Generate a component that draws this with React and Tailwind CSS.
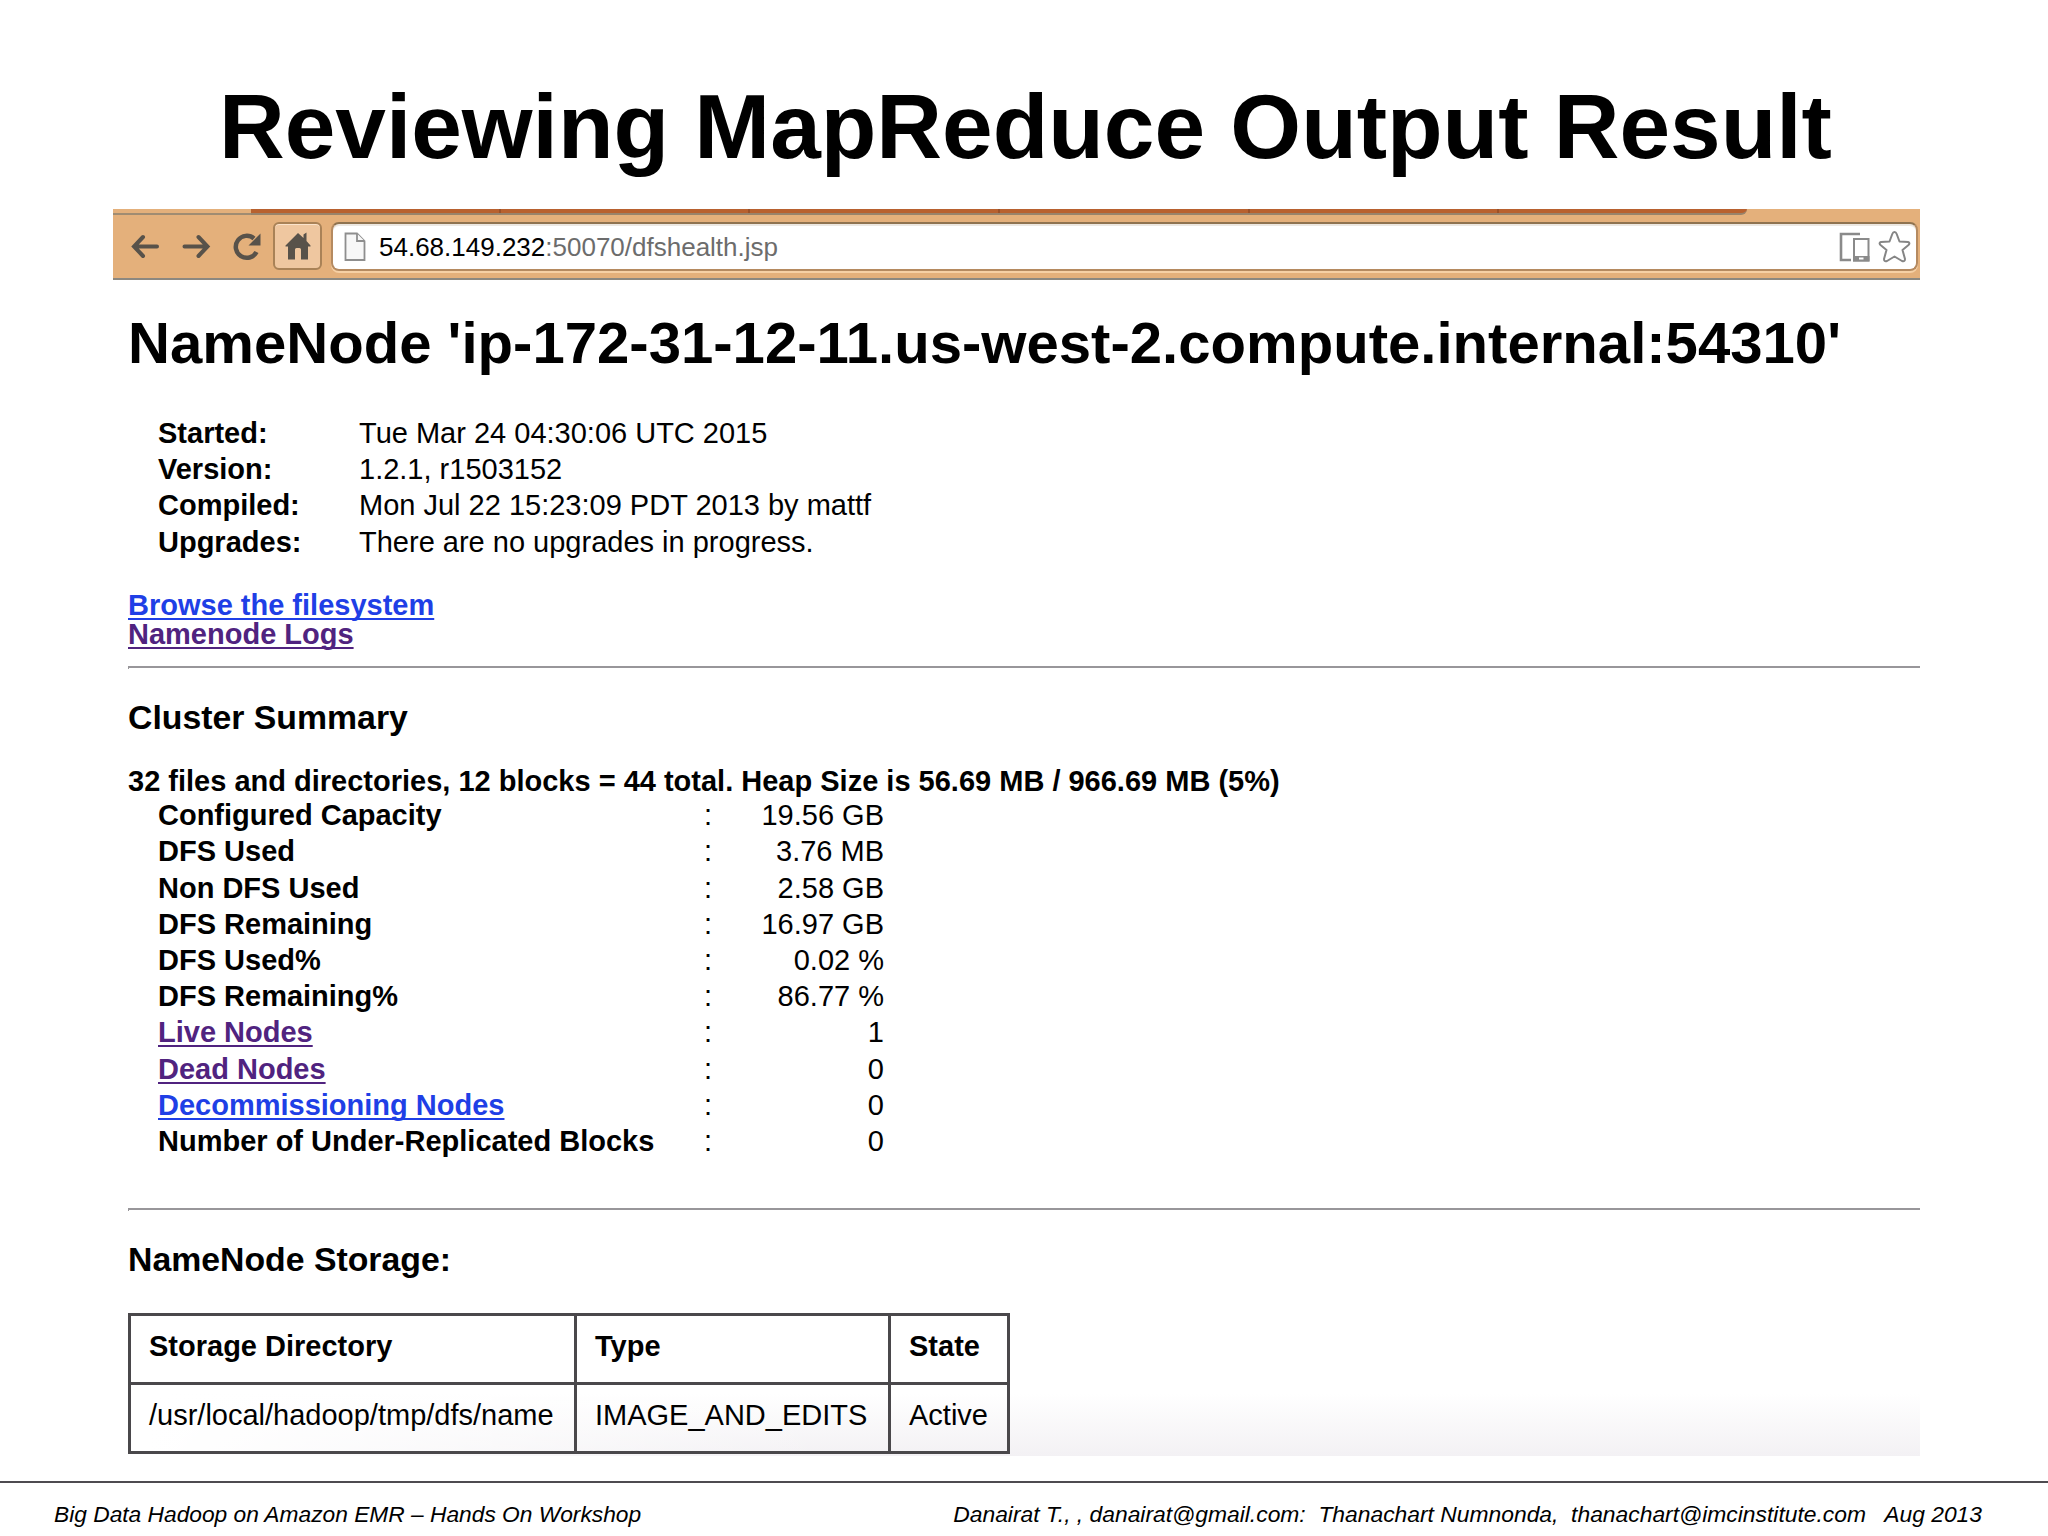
const info = [
  ["Started:", "Tue Mar 24 04:30:06 UTC 2015"],
  ["Version:", "1.2.1, r1503152"],
  ["Compiled:", "Mon Jul 22 15:23:09 PDT 2013 by mattf"],
  ["Upgrades:", "There are no upgrades in progress."],
];

const summary = [
  { label: "Configured Capacity", value: "19.56 GB" },
  { label: "DFS Used", value: "3.76 MB" },
  { label: "Non DFS Used", value: "2.58 GB" },
  { label: "DFS Remaining", value: "16.97 GB" },
  { label: "DFS Used%", value: "0.02 %" },
  { label: "DFS Remaining%", value: "86.77 %" },
  { label: "Live Nodes", value: "1", link: "visited" },
  { label: "Dead Nodes", value: "0", link: "visited" },
  { label: "Decommissioning Nodes", value: "0", link: "new" },
  { label: "Number of Under-Replicated Blocks", value: "0" },
];

const linkStyles = {
  new: "text-[#1f3fe6] underline decoration-2 underline-offset-[3px] [text-decoration-skip-ink:none]",
  visited: "text-[#50237f] underline decoration-2 underline-offset-[3px] [text-decoration-skip-ink:none]",
};

function Link({ kind, children }) {
  return <a className={linkStyles[kind]}>{children}</a>;
}

function Rule() {
  return <hr className="h-[3px] border-0 border-t-2 border-l border-[#98969a]" />;
}

function BrowserBar() {
  return (
    <div className="flex h-[71px] flex-col border-b-2 border-[#8c8880] bg-[#e4b07b]">
      <div className="flex h-[6px] shrink-0">
        <div className="w-[138px] border-b-2 border-[#a08c72] bg-[#e4b07b]" />
        <div className="flex w-[1496px] justify-evenly rounded-br-md border-b-2 border-[#98836b] bg-[#b8612f]">
          <span className="w-[2px] bg-[#9b5128]" />
          <span className="w-[2px] bg-[#9b5128]" />
          <span className="w-[2px] bg-[#9b5128]" />
          <span className="w-[2px] bg-[#9b5128]" />
          <span className="w-[2px] bg-[#9b5128]" />
        </div>
      </div>
      <div className="flex items-start pt-[7px]">
        <svg className="mt-[9px] ml-[17px] h-8 w-[30px]" viewBox="0 0 30 32" fill="none" stroke="#58524a" strokeWidth="4" strokeLinecap="round">
          <path d="M27 15.500H4.500M13 6L4 15.500L13 25" />
        </svg>
        <svg className="mt-[9px] ml-[21px] h-8 w-[30px]" viewBox="0 0 30 32" fill="none" stroke="#58524a" strokeWidth="4" strokeLinecap="round">
          <path d="M3.500 15.500H26M17.500 6L26.500 15.500L17.500 25" />
        </svg>
        <svg className="mt-[9px] ml-[21px] h-8 w-[30px]" viewBox="0 0 30 32" fill="none">
          <path d="M24.500 21A11 11 0 1 1 22 7.500" stroke="#58524a" strokeWidth="4.500" />
          <path d="M28.500 2.500V14.500H16.500Z" fill="#58524a" />
        </svg>
        <div className="ml-[11px] flex h-[48px] w-[49px] items-center justify-center rounded-md border-2 border-[#a98257] bg-[#efc7a0] shadow-[inset_0_1px_0_#fbe3cb]">
          <svg className="h-[30px] w-[28px]" viewBox="0 0 28 30" fill="#58524a">
            <path d="M14 2L19.500 7V3.500L22.500 1.500V10L26.500 14.500V15.500H24V28.500H17V18.500Q17 17 15.500 17H12.500Q11 17 11 18.500V28.500H4V15.500H1.500V14.500Z" />
          </svg>
        </div>
        <div className="ml-[9px] flex h-[49px] w-[1587px] items-center rounded-lg border-2 border-[#b58a60] border-t-[#8f7350] bg-white shadow-[inset_0_2px_0_#ece7e1,0_2px_0_#f6d0a5]">
          <svg className="ml-[11px] h-[30px] w-[22px]" viewBox="0 0 22 30" fill="#f7f7f7" stroke="#8e8e8e" strokeWidth="1.800">
            <path d="M1.500 1.500H13L20.500 9V28H1.500Z" />
            <path d="M13 1.500V9H20.500" />
          </svg>
          <span className="mt-[2px] ml-[13px] text-[26px] whitespace-pre text-[#6c6c6c]">
            <span className="text-black">54.68.149.232</span>:50070/dfshealth.jsp
          </span>
          <svg className="ml-auto h-[32px] w-[31px]" viewBox="0 0 31 32" fill="none" stroke="#8a8a8a" strokeWidth="2">
            <path d="M21 3H2V29H12" strokeWidth="2.600" />
            <path d="M15 8H29.500V29.500H15Z" />
            <path d="M15 26H29.500V29.500H15Z" fill="#8a8a8a" />
            <path d="M20 27.500H24.500" stroke="white" />
          </svg>
          <svg className="mr-[5px] ml-[8px] h-[34px] w-[33px]" viewBox="0 0 33 34" fill="none" stroke="#858585" strokeWidth="2" strokeLinejoin="round">
            <path d="M16.500 2Q18 2 18.700 4L21.500 11.500L30 12Q32.500 13 30.500 15L24.500 20L27 29Q27 32 24 31L16.500 26.500L9 31Q6 32 6 29L8.500 20L2.500 15Q.500 13 3 12L11.500 11.500L14.300 4Q15 2 16.500 2Z" />
          </svg>
        </div>
      </div>
    </div>
  );
}

function StorageTable() {
  return (
    <table className="mt-[34px] w-[881px] table-fixed border-collapse border-[3px] border-[#4a484b] text-left">
      <colgroup>
        <col className="w-[446px]" />
        <col className="w-[314px]" />
        <col className="w-[119px]" />
      </colgroup>
      <tbody>
        <tr className="h-[69px]">
          <th className="border-[3px] border-[#4a484b] pb-[6px] pl-[18px]">Storage Directory</th>
          <th className="border-[3px] border-[#4a484b] pb-[6px] pl-[18px]">Type</th>
          <th className="border-[3px] border-[#4a484b] pb-[6px] pl-[18px]">State</th>
        </tr>
        <tr className="h-[69px]">
          <td className="border-[3px] border-[#4a484b] pb-[6px] pl-[18px]">/usr/local/hadoop/tmp/dfs/name</td>
          <td className="border-[3px] border-[#4a484b] pb-[6px] pl-[18px]">IMAGE_AND_EDITS</td>
          <td className="border-[3px] border-[#4a484b] pb-[6px] pl-[18px]">Active</td>
        </tr>
      </tbody>
    </table>
  );
}

export default function App() {
  return (
    <div className="flex h-[1536px] w-[2048px] flex-col overflow-hidden bg-white font-['Liberation_Sans',Arial,sans-serif] text-black">
      <header className="h-[209px] shrink-0 pt-[77px] pl-[219px]">
        <h1 className="text-[91px] leading-[100px] font-bold whitespace-nowrap">Reviewing MapReduce Output Result</h1>
      </header>

      <main className="ml-[113px] h-[1247px] w-[1807px] shrink-0 bg-[linear-gradient(to_right,white_2%,transparent_40%),linear-gradient(to_bottom,white_95%,#f3f1f4)]">
        <BrowserBar />
        <div className="pl-[15px] text-[29px] leading-[36.2px] whitespace-nowrap">
          <h2 className="pt-[33px] text-[58.1px] leading-[60px] font-bold">
            NameNode 'ip-172-31-12-11.us-west-2.compute.internal:54310'
          </h2>

          <div className="mt-[42px] grid grid-cols-[201px_1fr] pl-[30px]">
            {info.map(([label, value]) => (
              <div key={label} className="contents">
                <b>{label}</b>
                <span>{value}</span>
              </div>
            ))}
          </div>

          <div className="mt-[31px] mb-[17px] flex flex-col items-start leading-[29px] font-bold">
            <Link kind="new">Browse the filesystem</Link>
            <Link kind="visited">Namenode Logs</Link>
          </div>
          <Rule />

          <h3 className="mt-[28px] text-[33.8px] leading-[40px] font-bold">Cluster Summary</h3>
          <p className="mt-[29px] leading-[30px] font-bold">
            32 files and directories, 12 blocks = 44 total. Heap Size is 56.69 MB / 966.69 MB (5%)
          </p>
          <div className="mt-[1.4px] mb-[48.6px] pl-[30px]">
            {summary.map(({ label, value, link }) => (
              <div key={label} className="flex">
                <b className="w-[546px]">{link ? <Link kind={link}>{label}</Link> : label}</b>
                <span className="w-[20px]">:</span>
                <span className="w-[160px] text-right">{value}</span>
              </div>
            ))}
          </div>
          <Rule />

          <h3 className="mt-[28px] text-[33.8px] leading-[40px] font-bold">NameNode Storage:</h3>
          <StorageTable />
        </div>
      </main>

      <footer className="mt-[25px] flex h-[55px] items-start justify-between border-t-2 border-[#4d4b50] pt-[17px] pr-[66px] pl-[54px] text-[22.75px] leading-[28px] whitespace-pre italic">
        <span>Big Data Hadoop on Amazon EMR – Hands On Workshop</span>
        <span className="text-[22.85px]">
          {"Danairat T., , danairat@gmail.com:  Thanachart Numnonda,  thanachart@imcinstitute.com   Aug 2013"}
        </span>
      </footer>
    </div>
  );
}
